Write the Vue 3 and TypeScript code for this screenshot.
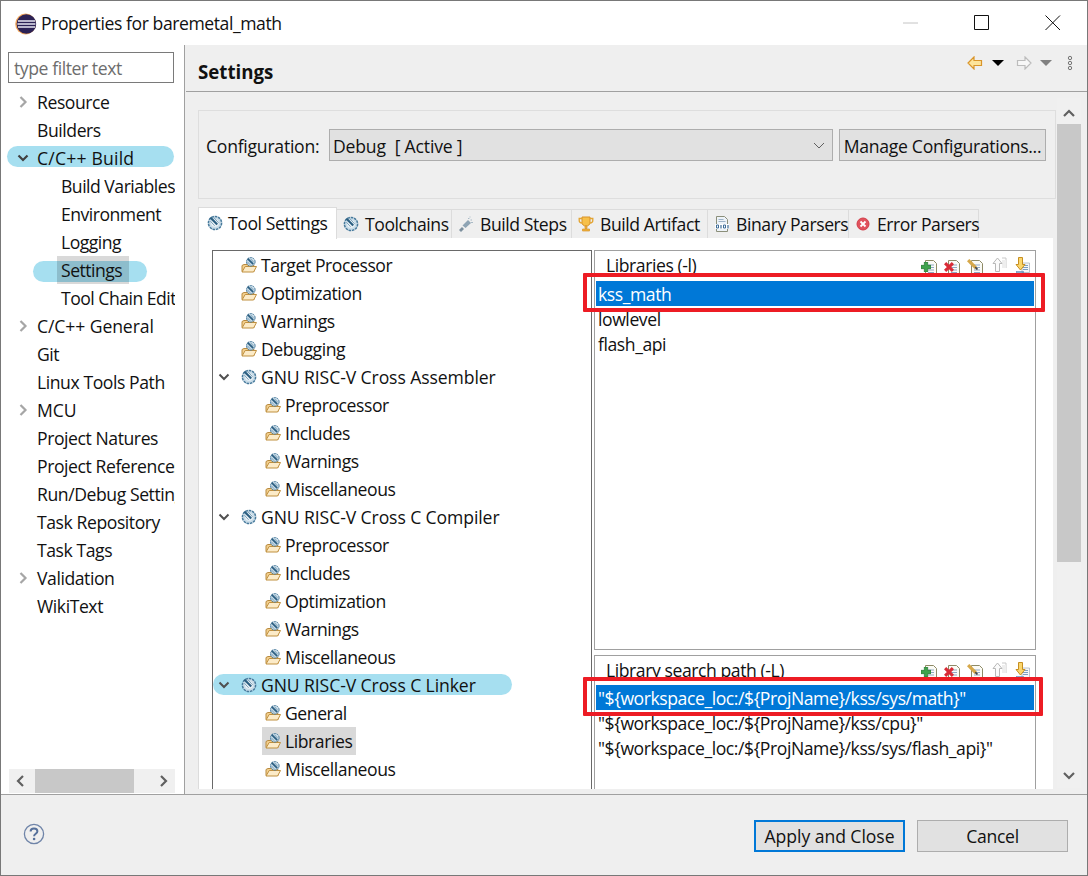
<template>
  <div class="window">
    <svg class="defs" aria-hidden="true">
      <symbol id="i-gear" viewBox="0 0 16 16">
        <circle cx="8" cy="8" r="6.6" fill="#c9dce8" stroke="#477a9c" stroke-width="1.5" stroke-dasharray="2.6 0.8" />
        <circle cx="8" cy="8" r="3.8" fill="#eef4f8" />
        <path d="M3.4 2.6l6.8 7" stroke="#2c5f82" stroke-width="2.2" />
        <path d="M6.6 2.4l5 5.4M3.4 6.2l4.2 4.6" stroke="#7ea3bb" stroke-width="1" />
      </symbol>
      <symbol id="i-folder" viewBox="0 0 16 16">
        <path d="M1 14.5V8.5l2-1h4v1h6v6z" fill="#f3d08f" stroke="#b98a3e" />
        <path d="M1 15L4.2 9.5H15.5L12.6 15z" fill="#fcebc8" stroke="#c0903f" />
        <circle cx="9.8" cy="4.8" r="4.3" fill="#c9dce8" stroke="#477a9c" stroke-dasharray="2 0.7" />
        <path d="M6.6 1.6l5.6 5.6" stroke="#2c5f82" stroke-width="1.8" />
        <path d="M9.4 1.6l3.2 3.6M6.2 4.6l3 3.2" stroke="#7ea3bb" />
      </symbol>
      <symbol id="i-steps" viewBox="0 0 16 16">
        <path d="M1 14l3-3 2 2-3 3z" fill="#7c8f9e" />
        <path d="M4.5 9.5L10 4l3 3-5.5 5z" fill="#8ea4b4" />
        <path d="M10 2.5h1.4M12.5 4h1.5M13 6.5h2M11.5 1h1" stroke="#a9bac6" stroke-width="1.2" />
      </symbol>
      <symbol id="i-trophy" viewBox="0 0 16 16">
        <path d="M4 1h8v5.5c0 2-1.6 3.5-4 3.5S4 8.5 4 6.5z" fill="#f7c04a" stroke="#d9932a" />
        <path d="M4 2.5H1.2v2c0 1.6 1.2 2.5 3 2.5M12 2.5h2.8v2c0 1.6-1.2 2.5-3 2.5" fill="none" stroke="#e3a431" stroke-width="1.3" />
        <path d="M7 10h2v2.5H7zM4.5 13h7v2h-7z" fill="#f0b23c" stroke="#d9932a" stroke-width="0.7" />
      </symbol>
      <symbol id="i-binary" viewBox="0 0 16 16">
        <path d="M2.5 .5h8l3 3v12h-11z" fill="#eef3f8" stroke="#8b8f7a" />
        <path d="M4.5 3.5h5M4.5 5.5h7" stroke="#9db3c8" />
        <path d="M1 8h14v5H1z" fill="#fff" />
        <path d="M2.5 9h2v3h-2zM9.5 9h2v3h-2z" fill="none" stroke="#3e6d98" />
        <path d="M7 9v3.5M14 9v3.5" stroke="#3e6d98" stroke-width="1.2" />
      </symbol>
      <symbol id="i-error" viewBox="0 0 16 16">
        <circle cx="8" cy="8" r="6" fill="#e0525d" stroke="#d33c47" />
        <path d="M5.5 5.5l5 5M10.5 5.5l-5 5" stroke="#fff" stroke-width="1.8" />
      </symbol>
      <symbol id="i-doc" viewBox="0 0 16 16">
        <path d="M3.5 .5h8l3 3v12h-11z" fill="#fbfbf6" stroke="#8e8a66" />
        <path d="M6 5h6M6 7.5h6M6 10h6M6 12.5h6" stroke="#8fa8c4" />
      </symbol>
      <symbol id="i-up" viewBox="0 0 16 16">
        <path d="M11 1h4M15 1v10" stroke="#c9c9c9" />
        <path d="M11 3h4v8h-4z" fill="#eeeeee" />
        <path d="M6.5 1L11 6.5H8.5v8h-4v-8H2z" fill="#fbfbfb" stroke="#b8b8b8" />
      </symbol>
      <symbol id="i-down" viewBox="0 0 16 16">
        <path d="M8 6h7.5v9.5H8z" fill="#f5f7fa" stroke="#a9b5c2" stroke-width="0.8" />
        <path d="M9 8.5h5M9 10.5h5M9 12.5h5" stroke="#7d9ec2" />
        <path d="M4.5 .5h4v7H11l-4.5 5.5L2 7.5h2.5z" fill="#fbd66d" stroke="#c68f21" />
        <path d="M2 15h8" stroke="#4d7fb0" stroke-width="1.3" />
      </symbol>
    </svg>

    <header class="titlebar">
      <svg class="logo" viewBox="0 0 22 22">
        <circle cx="10.6" cy="11" r="10.4" fill="#f2a65a" />
        <circle cx="11.4" cy="11" r="9.8" fill="#2c2255" />
        <path d="M3 8h17M2.4 11h18M3 14h17" stroke="#e8e8f2" stroke-width="1.7" />
      </svg>
      <span class="title">Properties for baremetal_math</span>
      <div class="window-controls">
        <svg viewBox="0 0 16 16"><path d="M0 8h15" stroke="#c4c4c4" /></svg>
        <svg viewBox="0 0 16 16"><path d="M.5 .5h14v14H.5z" fill="none" stroke="#111" /></svg>
        <svg viewBox="0 0 16 16"><path d="M.5 .5l14.5 14.5M15 .5L.5 15" stroke="#111" /></svg>
      </div>
    </header>

    <div class="body">
      <aside class="sidebar">
        <input class="filter" type="text" placeholder="type filter text" />
        <ul class="nav">
          <li
            v-for="item in navItems"
            :key="item.label"
            class="row"
            :class="[`level-${item.level}`, item.pill, { wide: item.wide }]"
          >
            <svg v-if="item.arrow" class="arrow" viewBox="0 0 12 12">
              <path :d="item.arrow === 'open' ? arrowOpen : arrowClosed" fill="none" :stroke="item.arrow === 'open' ? '#404040' : '#a6a6a6'" stroke-width="2.2" />
            </svg>
            <span class="row-text" :class="{ selected: item.selected }">{{ item.label }}</span>
          </li>
        </ul>
        <div class="hscroll">
          <svg class="scroll-arrow" viewBox="0 0 12 12"><path d="M8 1L3 6l5 5" fill="none" stroke="#606060" stroke-width="2.2" /></svg>
          <div class="hthumb"></div>
          <svg class="scroll-arrow" viewBox="0 0 12 12"><path d="M4 1l5 5-5 5" fill="none" stroke="#606060" stroke-width="2.2" /></svg>
        </div>
      </aside>

      <main class="main">
        <div class="page-header">
          <h1>Settings</h1>
          <div class="page-nav">
            <svg viewBox="0 0 16 14"><path d="M7 1L1 7l6 6V9.5h7.5v-5H7z" fill="#fde49a" stroke="#d9952a" stroke-width="1.2" /></svg>
            <span class="tri"></span>
            <svg viewBox="0 0 16 14"><path d="M9 1l6 6-6 6V9.5H1.5v-5H9z" fill="#f7f7f7" stroke="#bcbcbc" stroke-width="1.2" /></svg>
            <span class="tri grey"></span>
            <svg class="dots" viewBox="0 0 6 16">
              <circle cx="3" cy="3" r="1.7" fill="#e8e8e8" stroke="#777" />
              <circle cx="3" cy="8" r="1.7" fill="#e8e8e8" stroke="#777" />
              <circle cx="3" cy="13" r="1.7" fill="#e8e8e8" stroke="#777" />
            </svg>
          </div>
        </div>

        <div class="content">
          <div class="pane">
            <section class="config">
              <label>Configuration:</label>
              <div class="select">
                <span>Debug&nbsp; [ Active ]</span>
                <svg viewBox="0 0 12 8"><path d="M1 1l5 5 5-5" fill="none" stroke="#606060" /></svg>
              </div>
              <button class="btn manage">Manage Configurations...</button>
            </section>

            <div class="tabs">
              <div
                v-for="tab in tabs"
                :key="tab.label"
                class="tab"
                :class="{ active: tab.active }"
                :style="{ width: tab.width + 'px' }"
              >
                <svg class="icon"><use :href="tab.icon" /></svg>
                <span>{{ tab.label }}</span>
              </div>
            </div>

            <div class="folder">
              <ul class="tool-tree">
                <li
                  v-for="item in toolItems"
                  :key="item.id"
                  class="row"
                  :class="[`tool-level-${item.level}`, { 'pill-linker': item.pill, wide: item.open }]"
                >
                  <svg v-if="item.open" class="tool-arrow" viewBox="0 0 12 12"><path :d="arrowOpen" fill="none" stroke="#505050" stroke-width="2" /></svg>
                  <span class="tool-label" :class="{ selected: item.selected }">
                    <svg class="icon"><use :href="item.open ? '#i-gear' : '#i-folder'" /></svg>
                    <span>{{ item.label }}</span>
                  </span>
                </li>
              </ul>

              <div class="lists">
                <section v-for="list in lists" :key="list.title" class="list-box" :class="list.cls">
                  <div class="list-head">
                    <span>{{ list.title }}</span>
                    <div class="list-tools">
                      <span class="doc-tool">
                        <svg class="icon"><use href="#i-doc" /></svg>
                        <svg class="badge" viewBox="0 0 9 9"><path d="M3 0h3v3h3v3H6v3H3V6H0V3h3z" fill="#3fa34d" stroke="#1f6f2c" stroke-width="0.6" /></svg>
                      </span>
                      <span class="doc-tool">
                        <svg class="icon"><use href="#i-doc" /></svg>
                        <svg class="badge" viewBox="0 0 9 9"><path d="M1 1l7 7M8 1L1 8" stroke="#d92b36" stroke-width="2.8" /></svg>
                      </span>
                      <span class="doc-tool">
                        <svg class="icon"><use href="#i-doc" /></svg>
                        <svg class="badge pencil" viewBox="0 0 10 10"><path d="M1 1l7 7" stroke="#d6a84a" stroke-width="3" /><path d="M7.5 7.5L9.5 9.5" stroke="#444" stroke-width="1.6" /></svg>
                      </span>
                      <svg class="icon"><use href="#i-up" /></svg>
                      <svg class="icon"><use href="#i-down" /></svg>
                    </div>
                  </div>
                  <ul class="list-items">
                    <li v-for="(entry, i) in list.items" :key="entry" :class="{ current: i === 0 }">{{ entry }}</li>
                  </ul>
                  <div class="marker"></div>
                </section>
              </div>
            </div>
          </div>

          <div class="vscroll">
            <svg viewBox="0 0 12 8"><path d="M1 7l5-5 5 5" fill="none" stroke="#606060" stroke-width="2.2" /></svg>
            <div class="vthumb"></div>
            <svg viewBox="0 0 12 8"><path d="M1 1l5 5 5-5" fill="none" stroke="#606060" stroke-width="2.2" /></svg>
          </div>
        </div>
      </main>
    </div>

    <footer class="footer">
      <svg class="help" viewBox="0 0 22 22">
        <circle cx="11" cy="11" r="9.6" fill="none" stroke="#6f84a8" stroke-width="1.3" />
        <path d="M7.6 8.6c0-2 1.5-3.1 3.4-3.1s3.4 1 3.4 2.8c0 2.6-3.3 2.4-3.3 5" fill="none" stroke="#56709b" stroke-width="2" />
        <circle cx="11.1" cy="16" r="1.3" fill="#56709b" />
      </svg>
      <button class="btn primary">Apply and Close</button>
      <button class="btn cancel">Cancel</button>
    </footer>
  </div>
</template>

<script setup lang="ts">
interface NavItem {
  label: string
  level: number
  arrow?: 'open' | 'closed'
  pill?: string
  selected?: boolean
  wide?: boolean
}

interface ToolItem {
  id: number
  label: string
  level: number
  open?: boolean
  pill?: boolean
  selected?: boolean
}

const arrowOpen = 'M1.5 3.5L6 8l4.5-4.5'
const arrowClosed = 'M3.5 1L8.5 6l-5 5'

const navItems: NavItem[] = [
  { label: 'Resource', level: 0, arrow: 'closed' },
  { label: 'Builders', level: 0 },
  { label: 'C/C++ Build', level: 0, arrow: 'open', pill: 'pill-build', wide: true },
  { label: 'Build Variables', level: 1 },
  { label: 'Environment', level: 1 },
  { label: 'Logging', level: 1 },
  { label: 'Settings', level: 1, pill: 'pill-settings', selected: true },
  { label: 'Tool Chain Editor', level: 1 },
  { label: 'C/C++ General', level: 0, arrow: 'closed', wide: true },
  { label: 'Git', level: 0 },
  { label: 'Linux Tools Path', level: 0 },
  { label: 'MCU', level: 0, arrow: 'closed', wide: true },
  { label: 'Project Natures', level: 0 },
  { label: 'Project References', level: 0 },
  { label: 'Run/Debug Settings', level: 0 },
  { label: 'Task Repository', level: 0 },
  { label: 'Task Tags', level: 0 },
  { label: 'Validation', level: 0, arrow: 'closed' },
  { label: 'WikiText', level: 0 }
]

const tabs = [
  { label: 'Tool Settings', icon: '#i-gear', width: 139, active: true },
  { label: 'Toolchains', icon: '#i-gear', width: 115 },
  { label: 'Build Steps', icon: '#i-steps', width: 120 },
  { label: 'Build Artifact', icon: '#i-trophy', width: 136 },
  { label: 'Binary Parsers', icon: '#i-binary', width: 141 },
  { label: 'Error Parsers', icon: '#i-error', width: 130 }
]

const toolLabels: Array<[string, number, boolean?]> = [
  ['Target Processor', 0],
  ['Optimization', 0],
  ['Warnings', 0],
  ['Debugging', 0],
  ['GNU RISC-V Cross Assembler', 0, true],
  ['Preprocessor', 1],
  ['Includes', 1],
  ['Warnings', 1],
  ['Miscellaneous', 1],
  ['GNU RISC-V Cross C Compiler', 0, true],
  ['Preprocessor', 1],
  ['Includes', 1],
  ['Optimization', 1],
  ['Warnings', 1],
  ['Miscellaneous', 1],
  ['GNU RISC-V Cross C Linker', 0, true],
  ['General', 1],
  ['Libraries', 1],
  ['Miscellaneous', 1]
]

const toolItems: ToolItem[] = toolLabels.map(([label, level, open], id) => ({
  id,
  label,
  level,
  open,
  pill: label === 'GNU RISC-V Cross C Linker',
  selected: label === 'Libraries'
}))

const lists = [
  {
    title: 'Libraries (-l)',
    cls: 'libs',
    items: ['kss_math', 'lowlevel', 'flash_api']
  },
  {
    title: 'Library search path (-L)',
    cls: 'paths',
    items: [
      '"${workspace_loc:/${ProjName}/kss/sys/math}"',
      '"${workspace_loc:/${ProjName}/kss/cpu}"',
      '"${workspace_loc:/${ProjName}/kss/sys/flash_api}"'
    ]
  }
]
</script>

<style>
html,
body {
  margin: 0;
  background: #fff;
}
</style>

<style scoped>
* {
  box-sizing: border-box;
}

ul {
  list-style: none;
  margin: 0;
  padding: 0;
}

.defs {
  position: absolute;
  width: 0;
  height: 0;
}

.icon {
  width: 16px;
  height: 16px;
  flex: none;
}

.window {
  width: 1088px;
  height: 876px;
  border: 1px solid #787878;
  display: flex;
  flex-direction: column;
  font-family: "Open Sans", "Noto Sans", sans-serif;
  font-size: 17.6px;
  letter-spacing: -0.43px;
  color: #111;
  overflow: hidden;
}

.titlebar {
  height: 44px;
  flex: none;
  display: flex;
  align-items: center;
  padding-left: 14px;
  background: #fff;
}

.logo {
  width: 22px;
  height: 22px;
  margin-right: 4px;
  margin-top: 1px;
}

.window-controls {
  margin-left: auto;
  display: flex;
  gap: 55px;
  padding-right: 26px;
  margin-top: -1px;
}

.window-controls svg {
  width: 16px;
  height: 16px;
}

.body {
  flex: 1;
  display: flex;
  min-height: 0;
}

.sidebar {
  width: 184px;
  flex: none;
  border-right: 1px solid #a0a0a0;
  display: flex;
  flex-direction: column;
  padding: 7px 9px 1px 7px;
  background: #fff;
}

.filter {
  width: 166px;
  height: 31px;
  flex: none;
  border: 1px solid #7a7a7a;
  padding: 0 5px;
  font: inherit;
  letter-spacing: inherit;
  outline: none;
}

.filter::placeholder {
  color: #6d6d6d;
  opacity: 1;
}

.nav {
  flex: 1;
  margin: 5px 0 0 -7px;
  width: 174px;
  overflow: hidden;
}

.row {
  position: relative;
  height: 28px;
  display: flex;
  align-items: center;
  white-space: nowrap;
}

.row.wide {
  letter-spacing: -0.1px;
}

.row.pill-build {
  letter-spacing: 0.2px;
}

.row::before {
  content: "";
  position: absolute;
  display: none;
  background: #a6dff0;
  border-radius: 11px;
}

.pill-build::before {
  display: block;
  left: 6px;
  right: 1px;
  top: 2px;
  height: 21px;
}

.pill-settings::before {
  display: block;
  left: 32px;
  width: 114px;
  top: 5px;
  height: 21px;
}

.pill-linker::before {
  display: block;
  left: 0;
  width: 299px;
  top: 3px;
  height: 21px;
}

.row-text,
.tool-label {
  position: relative;
  line-height: 28px;
}

.row-text.selected,
.tool-label.selected {
  background: rgba(0, 0, 0, 0.15);
}

.row-text.selected {
  min-width: 72px;
  padding: 0 4px;
}

.level-0 .row-text {
  position: absolute;
  left: 36px;
}

.level-1 .row-text {
  position: relative;
  margin-left: 60px;
  letter-spacing: -0.5px;
}

.level-1 .row-text.selected {
  margin-left: 56px;
}

.arrow {
  position: absolute;
  left: 16px;
  width: 12px;
  height: 12px;
}

.hscroll {
  height: 24px;
  flex: none;
  width: 166px;
  margin-left: 1px;
  background: #f0f0f0;
  display: flex;
  align-items: center;
  padding: 0 6px;
}

.scroll-arrow {
  width: 12px;
  height: 12px;
  flex: none;
}

.hthumb {
  width: 99px;
  height: 24px;
  margin: 0 auto 0 8px;
  background: #c8c8c8;
}

.main {
  flex: 1;
  min-width: 0;
  background: #efefef;
  display: flex;
  flex-direction: column;
}

.page-header {
  height: 47px;
  flex: none;
  margin-left: 1px;
  border-bottom: 1px solid #a0a0a0;
  display: flex;
  align-items: center;
  justify-content: space-between;
  padding: 0 12px;
}

.page-header h1 {
  margin: 6px 0 0;
  font-size: 18.7px;
  font-weight: 700;
  letter-spacing: 0;
}

.page-nav {
  display: flex;
  align-items: center;
  margin: -10px 2px 0 0;
}

.page-nav svg {
  width: 16px;
  height: 14px;
}

.page-nav svg.dots {
  width: 6px;
  height: 16px;
}

.tri {
  width: 0;
  height: 0;
  margin: 0 12px 0 9px;
  border-left: 6px solid transparent;
  border-right: 6px solid transparent;
  border-top: 6px solid #000;
}

.tri.grey {
  margin: 0 15px 0 8px;
  border-top-color: #808080;
}

.content {
  flex: 1;
  min-height: 0;
  display: flex;
  padding-left: 13px;
}

.pane {
  width: 858px;
  padding-top: 18px;
  flex: none;
}

.config {
  height: 89px;
  border: 1px solid #dedede;
  display: flex;
  align-items: flex-start;
  padding: 18px 9px 0 7px;
}

.config label {
  width: 123px;
  line-height: 34px;
  letter-spacing: -0.25px;
}

.select {
  width: 504px;
  height: 32px;
  border: 1px solid #adadad;
  background: #e1e1e1;
  display: flex;
  align-items: center;
  justify-content: space-between;
  padding: 2px 7px 0 3px;
  letter-spacing: -0.18px;
}

.select svg {
  width: 12px;
  height: 8px;
}

.btn {
  height: 32px;
  border: 1px solid #adadad;
  background: #e1e1e1;
  font: inherit;
  letter-spacing: -0.3px;
  color: #111;
  padding: 2px 0 0;
}

.manage {
  width: 207px;
  margin-left: 6px;
}

.tabs {
  display: flex;
  align-items: flex-end;
  margin-top: 8px;
  height: 31px;
}

.tab {
  height: 29px;
  flex: none;
  display: flex;
  align-items: center;
  gap: 6px;
  padding-left: 6px;
  border: 1px solid #dcdcdc;
  border-left: none;
  border-bottom: none;
  white-space: nowrap;
}

.tab.active {
  height: 32px;
  margin-bottom: -1px;
  background: #fff;
  border-left: 1px solid #dcdcdc;
  padding: 0 0 2px 8px;
  gap: 5px;
  position: relative;
  z-index: 1;
}

.folder {
  width: 855px;
  height: 551px;
  background: #fff;
  border-left: 1px solid #dcdcdc;
  padding: 12px 0 0 13px;
  display: flex;
  overflow: hidden;
}

.tool-tree {
  width: 380px;
  flex: none;
  height: 560px;
  border: 1px solid #696969;
  border-bottom: none;
}

.tool-label {
  display: inline-flex;
  align-items: center;
  gap: 4px;
  padding: 0 4px 0 0;
}

.tool-level-0 .tool-label {
  margin-left: 28px;
}

.tool-level-1 .tool-label {
  margin-left: 49px;
  padding-left: 3px;
}

.tool-arrow {
  position: absolute;
  left: 5px;
  width: 12px;
  height: 12px;
}

.lists {
  margin-left: 2px;
  width: 442px;
  flex: none;
  display: flex;
  flex-direction: column;
  gap: 5px;
}

.list-box {
  position: relative;
  border: 1px solid #a0a0a0;
  padding: 0 1px;
}

.libs {
  height: 400px;
  flex: none;
}

.paths {
  height: 150px;
  flex: none;
}

.list-head {
  display: flex;
  align-items: center;
  justify-content: space-between;
  padding: 0 4px 2px 10px;
}

.libs .list-head {
  height: 30px;
  padding-bottom: 3px;
}

.paths .list-head {
  height: 29px;
}

.list-tools {
  display: flex;
  gap: 7px;
}

.doc-tool {
  position: relative;
  width: 16px;
  height: 16px;
}

.badge {
  position: absolute;
  left: -1px;
  bottom: 1px;
  width: 10px;
  height: 10px;
}

.badge.pencil {
  width: 11px;
  height: 11px;
  left: -1px;
  bottom: 3px;
}

.list-items li {
  height: 25px;
  line-height: 27px;
  padding-left: 2px;
  white-space: nowrap;
}

.list-items li.current {
  background: #0078d7;
  color: #fff;
}

.marker {
  position: absolute;
  left: -12px;
  top: 22px;
  width: 462px;
  height: 39px;
  border: 4px solid #ed1c24;
  border-radius: 1px;
}

.paths .marker {
  top: 21px;
  width: 460px;
}

.vscroll {
  width: 24px;
  flex: none;
  margin: 6px 0 6px 1px;
  background: #f0f0f0;
  display: flex;
  flex-direction: column;
  align-items: center;
  padding-top: 11px;
  padding-bottom: 8px;
}

.vscroll svg {
  width: 12px;
  height: 8px;
  flex: none;
}

.vthumb {
  width: 24px;
  height: 438px;
  margin: 7px 0 auto;
  background: #c8c8c8;
}

.footer {
  height: 81px;
  flex: none;
  border-top: 1px solid #a0a0a0;
  background: #efefef;
  display: flex;
  align-items: center;
  padding: 0 19px 0 22px;
}

.help {
  width: 22px;
  height: 22px;
  margin-right: auto;
  margin-top: -2px;
}

.footer .btn {
  width: 151px;
  height: 32px;
  margin-top: 2px;
  padding-top: 0;
}

.primary {
  border: 2px solid #0078d7 !important;
  margin-right: 12px;
  letter-spacing: -0.05px !important;
}
</style>
